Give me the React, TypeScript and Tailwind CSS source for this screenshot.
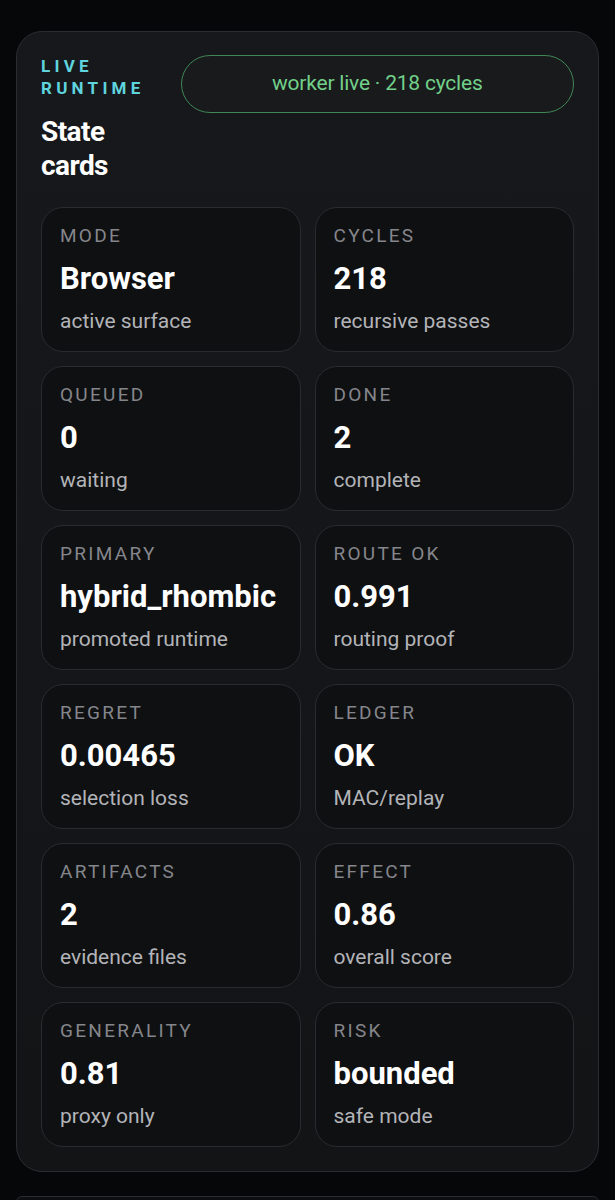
import React from "react";

const cards: [string, string, string][] = [
  ["MODE", "Browser", "active surface"],
  ["CYCLES", "218", "recursive passes"],
  ["QUEUED", "0", "waiting"],
  ["DONE", "2", "complete"],
  ["PRIMARY", "hybrid_rhombic", "promoted runtime"],
  ["ROUTE OK", "0.991", "routing proof"],
  ["REGRET", "0.00465", "selection loss"],
  ["LEDGER", "OK", "MAC/replay"],
  ["ARTIFACTS", "2", "evidence files"],
  ["EFFECT", "0.86", "overall score"],
  ["GENERALITY", "0.81", "proxy only"],
  ["RISK", "bounded", "safe mode"],
];

export default function App() {
  return (
    <div
      className="h-[1200px] w-[615px] overflow-hidden bg-[#060709] px-4 pt-[31px]"
      style={{ fontFamily: "Roboto, 'Noto Sans', sans-serif" }}
    >
      <div className="rounded-[26px] border border-[#2b2c30] bg-gradient-to-b from-[#17181b] to-[#131416] px-6 pb-6 pt-[23px]">
        <div className="flex items-start gap-[36px]">
          <div className="shrink-0">
            <div className="text-[17px] font-bold leading-[22px] tracking-[0.25em] text-[#5fd4de]">
              LIVE
              <br />
              RUNTIME
            </div>
            <div className="mt-[16px] text-[28px] font-bold leading-[34px] tracking-[-0.02em] text-white">
              State
              <br />
              cards
            </div>
          </div>
          <div className="flex h-[58px] flex-1 items-center justify-center rounded-full border border-[#3f8757] bg-[#191a1c] text-[21px] tracking-[-0.01em] text-[#72d08a]">
            worker live · 218 cycles
          </div>
        </div>
        <div className="mt-[24px] grid grid-cols-2 gap-x-[14px] gap-y-[14px]">
          {cards.map(([label, value, sub]) => (
            <div
              key={label}
              className="h-[145px] rounded-[22px] border border-[#2a2b2e] bg-[#0f1012] px-[18px] pt-[16px]"
            >
              <div className="text-[19px] leading-[24px] tracking-[0.12em] text-[#85868b]">
                {label}
              </div>
              <div className="mt-[13px] text-[31px] font-bold leading-[36px] text-white">
                {value}
              </div>
              <div className="mt-[10px] text-[21px] leading-[28px] text-[#b3b4b8]">
                {sub}
              </div>
            </div>
          ))}
        </div>
      </div>
      <div className="mt-[24px] h-[60px] rounded-t-[6px] border border-[#2b2c30] bg-[#0d0e10] px-6 pt-[3px] text-[18px] text-white">
        l/h/t
      </div>
    </div>
  );
}
